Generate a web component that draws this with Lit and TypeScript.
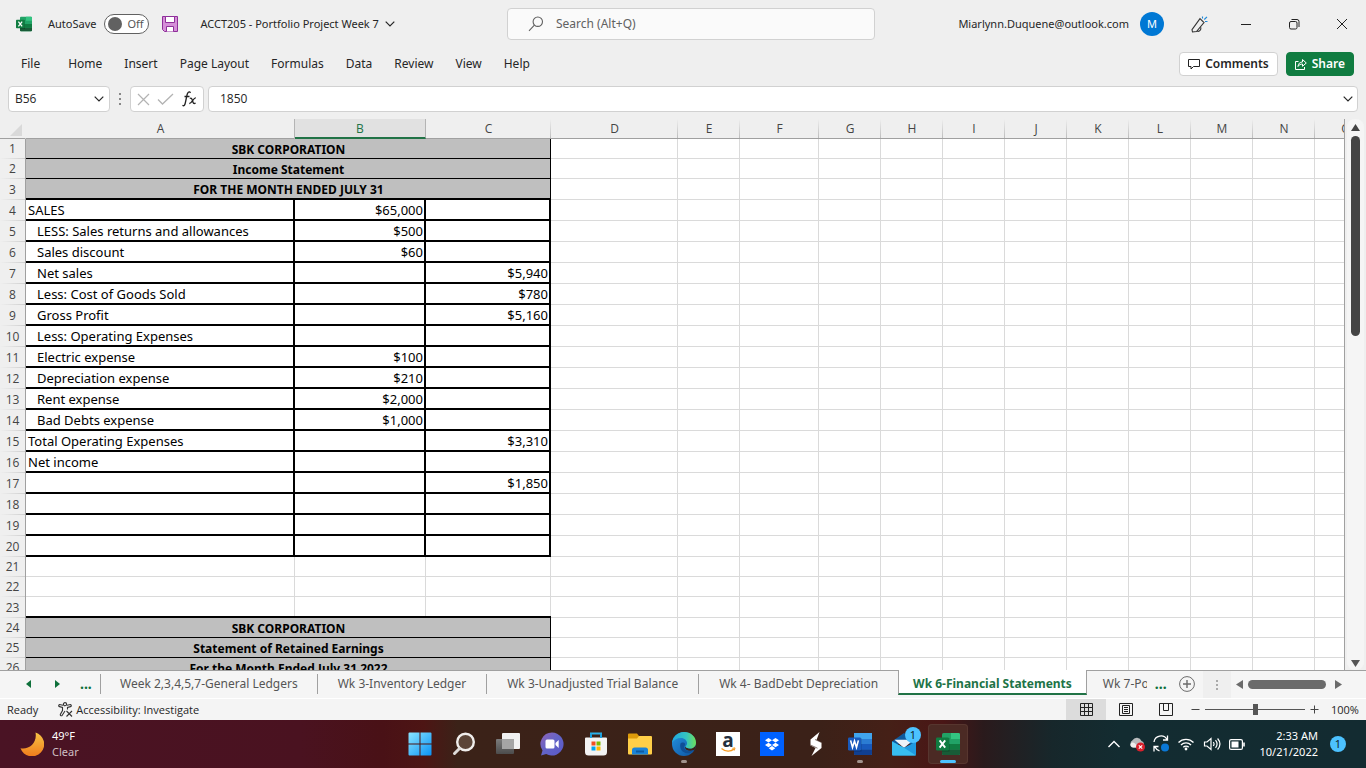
import { LitElement, html, css, svg, nothing } from "lit";
import { customElement } from "lit/decorators.js";
import { classMap } from "lit/directives/class-map.js";

type Row = { a?: string; b?: string; c?: string; title?: string; indent?: boolean };

const COLUMNS: [string, number][] = [
  ["A", 269], ["B", 131], ["C", 125], ["D", 127], ["E", 62], ["F", 79], ["G", 62],
  ["H", 62], ["I", 62], ["J", 62], ["K", 62], ["L", 62], ["M", 62], ["N", 62], ["O", 62],
];

const ROWS: Row[] = [
  { title: "SBK CORPORATION" },
  { title: "Income Statement" },
  { title: "FOR THE MONTH ENDED JULY 31" },
  { a: "SALES", b: "$65,000" },
  { a: "LESS: Sales returns and allowances", b: "$500", indent: true },
  { a: "Sales discount", b: "$60", indent: true },
  { a: "Net sales", c: "$5,940", indent: true },
  { a: "Less: Cost of Goods Sold", c: "$780", indent: true },
  { a: "Gross Profit", c: "$5,160", indent: true },
  { a: "Less: Operating Expenses", indent: true },
  { a: "Electric expense", b: "$100", indent: true },
  { a: "Depreciation expense", b: "$210", indent: true },
  { a: "Rent expense", b: "$2,000", indent: true },
  { a: "Bad Debts expense", b: "$1,000", indent: true },
  { a: "Total Operating Expenses", c: "$3,310" },
  { a: "Net income" },
  { c: "$1,850" },
  {}, {}, {}, {}, {}, {},
  { title: "SBK CORPORATION" },
  { title: "Statement of Retained Earnings" },
  { title: "For the Month Ended July 31 2022" },
];

const MENU = ["File", "Home", "Insert", "Page Layout", "Formulas", "Data", "Review", "View", "Help"];

const chevron = html`<svg width="10" height="6" viewBox="0 0 10 6" fill="none" stroke="currentColor" stroke-width="1.2"><path d="M.7.7 5 5 9.3.7"/></svg>`;

const officeIcon = (letter: string, size: number, c: string[]) => html`
  <svg width=${size} height=${size} viewBox="0 0 24 24">
    <rect x="6" y="1" width="18" height="22" rx="1.5" fill=${c[0]}/>
    <path d=${letter === "X" ? "M15 1h7.500a1.500 1.500 0 0 1 1.500 1.500V7h-9z" : "M6 1h18v6H6z"} fill=${c[1]}/>
    <path d=${letter === "X" ? "M6 7h9v5H6z" : "M6 7h18v5H6z"} fill=${c[2]}/>
    <path d="M6 12h18v5.500H6z" fill=${c[3]}/>
    <path d="M6 17.500h18V21.500a1.500 1.500 0 0 1-1.500 1.500H7.500A1.500 1.500 0 0 1 6 21.500z" fill=${c[4]}/>
    <path d="M6 6h7.500v13.500H6z" fill="#000" opacity=".22"/>
    <rect x="0" y="5.500" width="13" height="13" rx="1.200" fill=${c[5]}/>
    ${letter === "X"
      ? svg`<path d="M3.600 8.400 9.200 15.600M9.200 8.400 3.600 15.600" stroke="#fff" stroke-width="1.900" fill="none"/>`
      : svg`<path d="M2.600 8.400 4.500 15.400 6.500 9 8.500 15.400 10.400 8.400" stroke="#fff" stroke-width="1.600" fill="none"/>`}
  </svg>`;
const EXCEL = ["#21a366", "#33c481", "#21a366", "#107c41", "#185c37", "#107c41"];
const WORD = ["#2b7cd3", "#41a5ee", "#2b7cd3", "#185abd", "#103f91", "#185abd"];

const APPS: { name: string; icon: unknown; active?: boolean; running?: boolean; badge?: string }[] = [
  { name: "Start", icon: html`<svg width="24" height="24" viewBox="0 0 24 24"><defs><linearGradient id="w" x2="1" y2="1"><stop stop-color="#8be4ff"/><stop offset="1" stop-color="#0a93f5"/></linearGradient></defs><path fill="url(#w)" d="M.5 1.500a1 1 0 0 1 1-1h10v11H.5zM12.500.5h10a1 1 0 0 1 1 1v10h-11zM.5 12.500h11v11h-10a1 1 0 0 1-1-1zM12.500 12.500h11v10a1 1 0 0 1-1 1h-10z"/></svg>` },
  { name: "Search", icon: html`<svg width="24" height="24" viewBox="0 0 24 24"><circle cx="13.500" cy="10" r="8.300" fill="#5b4538" stroke="#f0eeec" stroke-width="2.400"/><path d="M7.500 16.500 2.500 21.500" stroke="#dedbd9" stroke-width="3" stroke-linecap="round"/></svg>` },
  { name: "Task view", icon: html`<svg width="26" height="24" viewBox="0 0 26 24"><defs><linearGradient id="t" x2="0" y2="1"><stop stop-color="#7b7b7b"/><stop offset="1" stop-color="#4c4c4c"/></linearGradient></defs><rect x="7" y="1" width="18" height="16" rx="1" fill="#f1f1f1"/><rect x="1" y="7" width="18" height="15" rx="1" fill="url(#t)"/><path d="M7 7h12v10H7z" fill="#a5a5a5"/></svg>` },
  { name: "Chat", icon: html`<svg width="24" height="24" viewBox="0 0 24 24"><defs><linearGradient id="c" x2="1" y2="1"><stop stop-color="#8e63b8"/><stop offset=".5" stop-color="#6264c7"/><stop offset="1" stop-color="#5a58c8"/></linearGradient></defs><path fill="url(#c)" d="M12 .5a11.500 11.500 0 1 1-5.800 21.400L1 23.500l1.500-5A11.500 11.500 0 0 1 12 .5z"/><rect x="5.500" y="7.500" width="9" height="9" rx="1.500" fill="#fff"/><path d="m15.500 11 3.200-3v8l-3.200-3z" fill="#fff"/></svg>` },
  { name: "Microsoft Store", icon: html`<svg width="24" height="24" viewBox="0 0 24 24"><path d="M7 5V1.500h10V5" fill="none" stroke="#2cb2ea" stroke-width="2"/><path d="M1 6.500a1 1 0 0 1 1-1h20a1 1 0 0 1 1 1V20a3.500 3.500 0 0 1-3.500 3.500h-15A3.500 3.500 0 0 1 1 20z" fill="#f3f3f3"/><path d="M7 1.500V6M17 1.500V6" stroke="#1c9fdc" stroke-width="2"/><path fill="#f25022" d="M7.500 9.500h4v4h-4z"/><path fill="#7fba00" d="M12.500 9.500h4v4h-4z"/><path fill="#00a4ef" d="M7.500 14.500h4v4h-4z"/><path fill="#ffb900" d="M12.500 14.500h4v4h-4z"/></svg>` },
  { name: "File Explorer", icon: html`<svg width="24" height="24" viewBox="0 0 24 24"><path d="M0 2.500a1 1 0 0 1 1-1h8l2 2.500h10V8H0z" fill="#dd9b0b"/><path d="M0 6.500h9L11 4h12a1 1 0 0 1 1 1v16.500a1 1 0 0 1-1 1H1a1 1 0 0 1-1-1z" fill="#ffcf48"/><path d="M4 22.500V18a2.500 2.500 0 0 1 2.500-2.500h11A2.500 2.500 0 0 1 20 18v4.500z" fill="#1a83d8"/><path d="M8 19.500h8" stroke="#0d5aa2" stroke-width="2"/></svg>` },
  { name: "Microsoft Edge", running: true, icon: html`<svg width="24" height="24" viewBox="0 0 24 24"><defs><linearGradient id="e1" x1="0" x2="1"><stop stop-color="#1fa7e0"/><stop offset=".6" stop-color="#35c4c0"/><stop offset="1" stop-color="#6ee05a"/></linearGradient><linearGradient id="e2" x2="1" y2="1"><stop stop-color="#2593e0"/><stop offset="1" stop-color="#0c53a0"/></linearGradient></defs><circle cx="12" cy="12" r="12" fill="url(#e2)"/><path d="M24 10.500c0 4-3 6-6 6-3 0-4.500-1.200-4.500-2l-.5.700c0 2.500 3.500 4.500 9.500 2.800 1-2 1.700-4.500 1.500-7.500z" fill="#3b2118"/><path d="M0 11C.5 5 5.500 0 12 0c7 0 12 5 12 10.500 0 4-3 6-6 6-3 0-4.500-1.200-4.500-2 0-.7 1.500-1 1.500-3.200C15 8.500 12.500 6 9 6c-4 0-7.500 2-9 5z" fill="url(#e1)"/><path d="M8.500 11.500c-1.500 5 2 9.500 7 9.800 3 .2 5.500-1.800 6.500-3.300-3 1.700-6.500 1.300-8.500-.5-1.500-1.400-1.800-3-.5-4.500.6-.8-.2-2.500-2-2.500-1.200 0-2.100.2-2.500 1z" fill="#0f4f96"/></svg>` },
  { name: "Amazon", icon: html`<svg width="24" height="24" viewBox="0 0 24 24"><path fill="#fff" d="M0 0h24v24H0z"/><text x="12" y="15" text-anchor="middle" font-family="Open Sans, sans-serif" font-weight="700" font-size="19" fill="#232f3e">a</text><path d="M5.500 16.500c4 3.200 9 3.200 12.500.6" fill="none" stroke="#f79a1f" stroke-width="1.500"/><path d="m16.300 16.300 2.700-.4-.7 2.600" fill="none" stroke="#f79a1f"/></svg>` },
  { name: "Dropbox", icon: html`<svg width="24" height="24" viewBox="0 0 24 24"><path fill="#0061fe" d="M0 0h24v24H0z"/><path fill="#fff" d="m8.500 6 3.500 2.300-3.500 2.300L5 8.300zM15.500 6 19 8.300l-3.500 2.300L12 8.300zM8.500 10.700l3.500 2.300-3.500 2.300L5 13zM15.500 10.700 19 13l-3.500 2.300L12 13zM12 14l3.300 2.200L12 18.400l-3.300-2.200z"/></svg>` },
  { name: "Streamlabs", icon: html`<svg width="24" height="24" viewBox="0 0 24 24"><path fill="#fff" d="M15.500 0 6.500 7.500v6L11.500 16l-4 8L17.500 16V10.500L12.500 8z"/><path d="m6.500 13 7 3.200M11 7.500l6.500 3" stroke="#3b2219" stroke-width=".6"/></svg>` },
  { name: "Word", running: true, icon: officeIcon("W", 24, WORD) },
  { name: "Mail", badge: "1", icon: html`<svg width="24" height="24" viewBox="0 0 24 24"><path d="M0 9.500 12 1l12 8.500V12H0z" fill="#0e5a9e"/><path d="M2.500 7.700h19L12 16z" fill="#eef3f8"/><path d="M24 9.500V22.500a1 1 0 0 1-1 1H1a1 1 0 0 1-1-1V9.500l12 6.300z" fill="#1f9ae0"/><path d="m0 9.500 12 6.300 12 7.700H1a1 1 0 0 1-1-1z" fill="#38bdf0"/></svg>` },
  { name: "Excel", active: true, icon: officeIcon("X", 24, EXCEL) },
];

@customElement("sheet-grid")
class SheetGrid extends LitElement {
  static styles = css`
    :host { display: block; flex: 1; min-width: 0; overflow: hidden; background: #fff; border-right: 1px solid #a0a0a0; }
    table { width: 0; table-layout: fixed; border-collapse: separate; border-spacing: 0; font: 13px/16px "Noto Sans", sans-serif; color: #000; }
    .idx { width: 26px; }
    th { box-sizing: border-box; padding: 0; background: #efefef; color: #444; font: 12px/16px "Open Sans", sans-serif; }
    thead th { height: 20px; border-bottom: 1px solid #a0a0a0; background: linear-gradient(#efefef, #bdbdbd) right / 1px 100% no-repeat #efefef; }
    thead .corner { background: #efefef; border-right: 1px solid #efefef; }
    .corner svg { display: block; margin: 3px 0 0 10px; }
    thead .picked { height: 20px; background: #e1e1e1; color: #217346; border-bottom: 2px solid #217346; border-right: 1px solid #b4b4b4; box-shadow: -1px 0 #b4b4b4; line-height: 15px; }
    tbody th { border-right: 1px solid #a0a0a0; background: linear-gradient(to right, #efefef, #cfcfcf) bottom / 100% 1px no-repeat #efefef; }
    td { box-sizing: border-box; height: 20px; padding: 0 1px 0 2px; border-right: 1px solid #dadada; border-bottom: 1px solid #dadada; white-space: nowrap; overflow: hidden; }
    .tall td { height: 21px; }
    .heavy { border-right: 2px solid #000; border-bottom: 2px solid #000; }
    .under { border-right: 0; border-bottom: 2px solid #000; background: linear-gradient(#dadada, #dadada) right / 1px 100% no-repeat; }
    .title { padding-top: 2px; background: #bfbfbf; border-right: 1px solid #000; border-bottom-color: #000; font-size: 12px; font-weight: 700; text-align: center; }
    .indent { padding-left: 11px; }
    .money { text-align: right; }
  `;

  row(r: Row, i: number) {
    const n = i + 1;
    const boxed = n >= 4 && n <= 20;
    const under = n === 3 || n === 23;
    const edge = { heavy: boxed, under };
    return html`<tr class=${classMap({ tall: boxed || under })}>
      <th scope="row">${n}</th>
      ${r.title
        ? html`<td colspan="3" class=${classMap({ title: true, under })}>${r.title}</td>`
        : html`<td class=${classMap({ ...edge, indent: !!r.indent })}>${r.a ?? nothing}</td>
            <td class=${classMap({ ...edge, money: true })}>${r.b ?? nothing}</td>
            <td class=${classMap({ ...edge, money: true })}>${r.c ?? nothing}</td>`}
      ${COLUMNS.slice(3).map(() => html`<td></td>`)}
    </tr>`;
  }

  render() {
    return html`<table>
      <colgroup><col class="idx" />${COLUMNS.map(([, w]) => html`<col style="width:${w}px" />`)}</colgroup>
      <thead><tr>
        <th class="corner"><svg width="12" height="12"><path d="M12 0v12H0z" fill="#d9d9d9"/></svg></th>
        ${COLUMNS.map(([c]) => html`<th scope="col" class=${classMap({ picked: c === "B" })}>${c}</th>`)}
      </tr></thead>
      <tbody>${ROWS.map((r, i) => this.row(r, i))}</tbody>
    </table>`;
  }
}

@customElement("task-bar")
class TaskBar extends LitElement {
  static styles = css`
    :host { display: grid; grid-template-columns: 1fr auto 1fr; height: 48px; color: #fff; font: 12px/16px "Noto Sans", sans-serif;
      background: linear-gradient(90deg, #4a1324 0, #4a1220 22%, #491116 28%, #4d1514 31%, #3b2218 33.500%, #3b2118 60%, #452017 65%, #4a1616 69%, #2a1a1c 72%, #17272b 77%, #132c31 82%, #132b31 100%); }
    button { all: unset; box-sizing: border-box; }
    .weather { display: flex; align-items: center; gap: 8px; padding-left: 20px; font-size: 11px; }
    .dim { color: #d0bfc4; }
    .apps { display: flex; align-items: center; margin-left: 2px; }
    .app { position: relative; width: 40px; height: 40px; margin: 0 2px; border-radius: 4px; display: grid; place-items: center; }
    .active { background: #4b2a24; box-shadow: inset 0 0 0 1px #57362f; }
    .app::after { position: absolute; left: 17px; bottom: 1px; width: 6px; height: 3px; border-radius: 2px; background: #a2938d; }
    .running::after { content: ""; }
    .active::after { content: ""; left: 12px; width: 16px; background: #4cc2ff; }
    .count { display: grid; place-items: center; width: 16px; height: 16px; border-radius: 50%; background: #4cc2ff; color: #10242c; font-size: 11px; }
    .app .count { position: absolute; right: 3px; top: 3px; }
    .tray { display: flex; align-items: center; justify-content: flex-end; gap: 8px; padding-right: 20px; }
    .clock { margin-left: 6px; margin-right: 4px; text-align: right; font-size: 11px; }
    svg { display: block; }
  `;

  render() {
    return html`
      <div class="weather">
        <svg width="24" height="24" viewBox="0 0 24 24"><defs><linearGradient id="m" x2="0" y2="1"><stop stop-color="#f6c445"/><stop offset="1" stop-color="#f07c1c"/></linearGradient></defs><path d="M15.500.5a12.200 12.200 0 1 1-15 15.800C9 18 17.500 11 15.500.5z" fill="url(#m)"/></svg>
        <div><div>49°F</div><div class="dim">Clear</div></div>
      </div>
      <nav class="apps">${APPS.map((a) => html`<button aria-label=${a.name} class=${classMap({ app: true, active: !!a.active, running: !!a.running })}>${a.icon}${a.badge ? html`<span class="count">${a.badge}</span>` : nothing}</button>`)}</nav>
      <div class="tray">
        <svg width="14" height="8" viewBox="0 0 14 8" fill="none" stroke="#fff" stroke-width="1.400"><path d="m1.500 7 5.500-5.500L12.500 7"/></svg>
        <svg width="16" height="16" viewBox="0 0 16 16"><path d="M4 11.500a4 4 0 0 1-.5-7.200A5 5 0 0 1 12.500 5 3.500 3.500 0 0 1 13 11.500z" fill="#b9bcbe"/><path d="M4 11.500c-3.500-.5-3.500-4.500-.5-5 1-.2 3.500 1 5.500 5z" fill="#eee"/><circle cx="11.500" cy="11" r="4.500" fill="#d9202c"/><path d="m9.800 9.300 3.400 3.400m0-3.400-3.400 3.400" stroke="#fff" stroke-width="1.100"/></svg>
        <svg width="16" height="18" viewBox="0 0 16 18" fill="none" stroke="#fff" stroke-width="1.300"><path d="M1 7a7 7 0 0 1 13-2.500M14.500.5v4.500h-4.500M6.500 15.800A7 7 0 0 1 2 12M1 16.500V11.500h4.500"/><circle cx="12" cy="12.500" r="4" fill="#0a78d6" stroke="none"/></svg>
        <svg width="18" height="14" viewBox="0 0 18 14" fill="none" stroke="#fff" stroke-width="1.400"><path d="M1.500 5.500a10.500 10.500 0 0 1 15 0M4 8a7 7 0 0 1 10 0M6.300 10.300a3.800 3.800 0 0 1 5.400 0"/><circle cx="9" cy="12" r="1.400" fill="#fff" stroke="none"/></svg>
        <svg width="18" height="14" viewBox="0 0 18 14" fill="none" stroke="#fff" stroke-width="1.200"><path d="M1.500 5v4h2.500L8 12.500v-11L4 5zM10.300 5c.9 1.200.9 2.800 0 4M12.500 3.200c2 2.400 2 5.200 0 7.600M14.600 1.500c3 3.500 3 7.500 0 11"/></svg>
        <svg width="16" height="11" viewBox="0 0 16 11"><rect x=".6" y=".6" width="12.800" height="9.800" rx="1.500" fill="none" stroke="#fff" stroke-width="1.200"/><path d="M2.500 2.500h7v6h-7zM14.200 3.500h1.600v4h-1.600z" fill="#fff"/></svg>
        <div class="clock"><div>2:33 AM</div><div>10/21/2022</div></div>
        <span class="count">1</span>
      </div>`;
  }
}

@customElement("app-root")
class AppRoot extends LitElement {
  static styles = css`
    :host { display: flex; flex-direction: column; height: 100vh; overflow: hidden; background: #efefef; color: #262626; font: 12px/16px "Noto Sans", sans-serif; }
    button, input { all: unset; box-sizing: border-box; }
    a { color: inherit; text-decoration: none; }
    svg { display: block; flex: none; }
    .titlebar { display: grid; grid-template-columns: minmax(0, 507fr) minmax(0, 368fr) minmax(0, 491fr); height: 48px; align-items: center; flex: none; font-size: 11px; }
    .left { display: flex; align-items: center; padding-left: 16px; white-space: nowrap; }
    .autosave { display: flex; align-items: center; gap: 8px; margin: 0 13px 0 16px; }
    .switch { display: flex; align-items: center; gap: 5px; width: 45px; height: 20px; padding-left: 3px; border: 1px solid #616161; border-radius: 10px; background: #fff; color: #555; }
    .knob { width: 14px; height: 14px; border-radius: 50%; background: #616161; }
    .doc { display: flex; align-items: center; gap: 6px; margin-left: 22px; }
    .search { display: flex; align-items: center; gap: 12px; height: 32px; padding-left: 20px; border: 1px solid #d1d1d1; border-radius: 4px; background: #fafafa; color: #616161; font-size: 12px; box-sizing: border-box; }
    .search input { flex: 1; min-width: 0; }
    .search input::placeholder { color: #616161; }
    .right { display: flex; align-items: center; justify-content: flex-end; padding-right: 18px; }
    .avatar { display: grid; place-items: center; width: 24px; height: 24px; margin: 0 27px 0 11px; border-radius: 50%; background: #0078d4; color: #fff; }
    .win { display: flex; gap: 36px; margin-left: 32px; }
    .ribbon { display: flex; align-items: center; justify-content: space-between; height: 32px; padding: 0 12px 0 21px; flex: none; }
    .menu { display: flex; gap: 22px; }
    .menu a:first-child { margin-right: 6px; }
    .actions { display: flex; gap: 8px; font-weight: 600; }
    .actions button { display: flex; align-items: center; gap: 5px; height: 24px; padding: 0 8px; border: 1px solid #d1d1d1; border-radius: 4px; background: #fff; }
    .actions .share { background: #107c41; border-color: #107c41; color: #fff; }
    .formula { display: flex; align-items: flex-start; height: 39px; padding: 6px 8px 0; flex: none; box-sizing: border-box; font-family: "Open Sans", sans-serif; }
    .box { display: flex; align-items: center; height: 26px; border: 1px solid #d1d1d1; border-radius: 4px; background: #fff; box-sizing: border-box; }
    .name { width: 102px; padding: 0 5px 0 6px; }
    .name input { flex: 1; min-width: 0; }
    .grip { width: 20px; height: 26px; display: grid; place-items: center; }
    .tools { width: 74px; margin-right: 4px; justify-content: space-around; padding: 0 2px; }
    .entry { flex: 1; min-width: 0; padding: 0 4px 0 11px; }
    .entry input { flex: 1; min-width: 0; }
    .sheet { display: flex; flex: 1; min-height: 0; }
    .vscroll { display: flex; flex-direction: column; align-items: center; width: 17px; margin: 0 2px; padding: 4px 0 2px; border-radius: 8px; background: #f5f5f5; box-sizing: border-box; }
    .vthumb { width: 9px; height: 200px; margin: 4px 0 auto; border-radius: 5px; background: #444; }
    .tabs { display: flex; align-items: flex-start; height: 28px; flex: none; background: #f5f5f5; box-shadow: inset 0 1px #a0a0a0; color: #555; overflow: hidden; }
    .steps { display: flex; align-items: center; gap: 20px; width: 100px; height: 28px; padding-left: 26px; box-sizing: border-box; flex: none; }
    .dots { color: #0f703b; font-size: 14px; font-weight: 700; }
    .tab { flex: none; height: 20px; margin-top: 4px; padding: 0 20px; border-left: 1px solid #a0a0a0; line-height: 19px; box-sizing: border-box; white-space: nowrap; }
    .tab:first-of-type { padding: 0 19px; }
    .tab.current { height: 25px; margin: 0; padding: 4px 14px 0; border-right: 1px solid #a0a0a0; border-bottom: 2px solid #217346; background: #fff; color: #217346; font-weight: 700; }
    .tab.last { border: 0; padding: 0 0 0 16px; width: 60px; overflow: hidden; }
    .more { display: flex; align-items: center; height: 28px; gap: 12px; padding: 0 8px; flex: none; }
    .grab { display: grid; place-items: center; width: 28px; height: 27px; margin-top: 1px; background: #efefef; flex: none; }
    .hscroll { display: flex; align-items: center; flex: 1; gap: 4px; height: 26px; margin: 1px 24px 0 5px; }
    .hthumb { flex: 1; height: 9px; border-radius: 5px; background: #6b6b6b; }
    .status { display: flex; align-items: center; height: 22px; padding-left: 7px; flex: none; border-top: 1px solid #fff; box-sizing: border-box; background: #f4f4f4; font-size: 11px; font-family: "Open Sans", sans-serif; }
    .access { display: flex; align-items: center; gap: 3px; margin: 0 auto 0 20px; }
    .view { display: grid; place-items: center; width: 40px; height: 21px; }
    .view.on { background: #dcdcdc; }
    .zoom { display: flex; align-items: center; gap: 5px; margin-left: 5px; }
    .zoom input { width: 100px; height: 12px; background: linear-gradient(#555, #555) center / 100% 1px no-repeat; }
    .zoom input::-webkit-slider-thumb { -webkit-appearance: none; width: 5px; height: 11px; background: #555; }
    .pct { width: 27px; margin: 0 8px 0 7px; }
  `;

  render() {
    return html`
      <header class="titlebar">
        <div class="left">
          ${officeIcon("X", 16, EXCEL)}
          <div class="autosave"><span id="as">AutoSave</span><button class="switch" role="switch" aria-checked="false" aria-labelledby="as"><span class="knob"></span>Off</button></div>
          <button aria-label="Save"><svg width="16" height="16" viewBox="0 0 16 16"><path d="M.5.5h15v15h-13l-2-2z" fill="#d58fd8" stroke="#8f2f9a"/><path d="M3.500.5h9v6h-9zM4.500 15.500v-5h7v5" fill="#fff" stroke="#8f2f9a"/></svg></button>
          <button class="doc">ACCT205 - Portfolio Project Week 7 ${chevron}</button>
        </div>
        <label class="search">
          <svg width="16" height="16" viewBox="0 0 16 16" fill="none" stroke="#616161" stroke-width="1.100"><circle cx="9.800" cy="5.700" r="4.700"/><path d="M6.400 9.200 1 14.800"/></svg>
          <input type="search" aria-label="Search" placeholder="Search (Alt+Q)" />
        </label>
        <div class="right">
          <span>Miarlynn.Duquene@outlook.com</span>
          <span class="avatar">M</span>
          <svg width="17" height="17" viewBox="0 0 17 17" fill="none" stroke="#333" stroke-width="1.100"><path d="M9 2.700 13 6.500 5.500 15.500 1.500 16 1 13.700zM6 14.700c1 1.300 4 .8 4-3.200"/><path d="M11.500.5v2M13.300 3.500 16 .8M14 5.500h2.500" stroke="#1e88d8"/></svg>
          <div class="win">
            <button aria-label="Minimize"><svg width="12" height="12" stroke="#222"><path d="M1 6.500h10"/></svg></button>
            <button aria-label="Restore"><svg width="12" height="12" viewBox="0 0 12 12" fill="none" stroke="#222"><rect x="1.500" y="3.500" width="7.500" height="7.500" rx="1.500"/><path d="M3.500 1.500H9a2 2 0 0 1 2 2V9"/></svg></button>
            <button aria-label="Close"><svg width="12" height="12" viewBox="0 0 12 12" stroke="#222"><path d="m1 1 10 10M11 1 1 11"/></svg></button>
          </div>
        </div>
      </header>
      <div class="ribbon">
        <nav class="menu">${MENU.map((m) => html`<a href="#">${m}</a>`)}</nav>
        <div class="actions">
          <button><svg width="12" height="11" viewBox="0 0 12 11" fill="none" stroke="#222"><path d="M.5.500h11v7H5.500L3 10V7.500H.5z"/></svg>Comments</button>
          <button class="share"><svg width="12" height="12" viewBox="0 0 12 12" fill="none" stroke="#fff"><path d="M3.500 3.500h-3v8h9V9"/><path d="M3 8.500c.3-3 2-4.500 4.500-4.500V1.500L11.300 5 7.500 8.300V6C5.500 6 4 6.800 3 8.500z"/></svg>Share</button>
        </div>
      </div>
      <div class="formula">
        <div class="box name"><input aria-label="Name box" .value=${"B56"} />${chevron}</div>
        <div class="grip"><svg width="2" height="12" fill="#888"><path d="M0 0h2v2H0zM0 5h2v2H0zM0 10h2v2H0z"/></svg></div>
        <div class="box tools">
          <svg width="13" height="13" viewBox="0 0 13 13" stroke="#b3b3b3" stroke-width="1.200"><path d="m1 1 11 11M12 1 1 12"/></svg>
          <svg width="17" height="12" viewBox="0 0 17 12" fill="none" stroke="#b3b3b3" stroke-width="1.300"><path d="m1 6.500 4.500 4.500L16 1"/></svg>
          <svg width="15" height="16" viewBox="0 0 15 16" fill="none" stroke="#222" stroke-width="1.300"><path d="M8.500 1.800C7-.2 5.500 1.500 5 4L3.300 12C2.800 14.500 1.800 15.300.5 14.300M2.500 5.500h5M7.800 7.500c1.800-1 2.200.5 2.800 2.500.5 2 1 3.200 3 2M13.800 7c-2-.5-4.300 5.800-6.500 5.500"/></svg>
        </div>
        <div class="box entry"><input aria-label="Formula bar" .value=${"1850"} />${chevron}</div>
      </div>
      <main class="sheet">
        <sheet-grid></sheet-grid>
        <div class="vscroll"><svg width="9" height="9"><path d="M4.500 1 9 8H0z" fill="#444"/></svg><div class="vthumb"></div><svg width="9" height="9"><path d="M4.500 8 9 1H0z" fill="#555"/></svg></div>
      </main>
      <div class="tabs">
        <div class="steps"><svg width="9" height="8"><path d="M5 0v8L0 4z" fill="#0f703b"/></svg><svg width="5" height="8"><path d="M0 0v8l5-4z" fill="#0f703b"/></svg><span class="dots">...</span></div>
        <a href="#" class="tab">Week 2,3,4,5,7-General Ledgers</a>
        <a href="#" class="tab">Wk 3-Inventory Ledger</a>
        <a href="#" class="tab">Wk 3-Unadjusted Trial Balance</a>
        <a href="#" class="tab">Wk 4- BadDebt Depreciation</a>
        <a href="#" class="tab current">Wk 6-Financial Statements</a>
        <a href="#" class="tab last">Wk 7-Po</a>
        <div class="more"><span class="dots">...</span><button aria-label="New sheet"><svg width="16" height="16" viewBox="0 0 16 16" fill="none" stroke="#6b6b6b"><circle cx="8" cy="8" r="7.400"/><path d="M8 4v8M4 8h8" stroke-width="1.400"/></svg></button></div>
        <div class="grab"><svg width="2" height="10" fill="#aaa"><path d="M0 0h2v2H0zM0 4h2v2H0zM0 8h2v2H0z"/></svg></div>
        <div class="hscroll"><svg width="8" height="9"><path d="M7 0v9L0 4.500z" fill="#6b6b6b"/></svg><div class="hthumb"></div><svg width="12" height="9"><path d="M5 0v9l7-4.500z" fill="#6b6b6b"/></svg></div>
      </div>
      <footer class="status">
        <span>Ready</span>
        <span class="access"><svg width="15" height="15" viewBox="0 0 15 15" fill="none" stroke="#333" stroke-width="1.100"><circle cx="7" cy="2.200" r="1.600"/><path d="M5 3.200 1.500 2.500C.3 3 .5 4.300 1.500 4.600l3 .9v3L2.300 12.500c-.2 1.200 1.200 1.700 1.900.8L7 9M9 3.200l3.500-.7c1.200.5 1 1.800 0 2.100l-3 .9V7.500M8.500 9l5.500 5.500M14 9l-5.500 5.500"/></svg>Accessibility: Investigate</span>
        <button class="view on" aria-label="Normal"><svg width="13" height="13" viewBox="0 0 13 13" fill="none" stroke="#222"><path d="M.5.500h12v12H.5zM4.500.5v12M8.500.5v12M.5 4.500h12M.5 8.500h12"/></svg></button>
        <button class="view" aria-label="Page layout"><svg width="14" height="13" viewBox="0 0 14 13" fill="none" stroke="#222"><path d="M.5.500h13v12H.5zM3.500 2.500h7v8h-7zM5 4.500h4M5 6.500h4M5 8.500h4"/></svg></button>
        <button class="view" aria-label="Page break preview"><svg width="14" height="13" viewBox="0 0 14 13" fill="none" stroke="#222"><path d="M.5.500h13v12H.5zM4.500.5v7h5v-7"/></svg></button>
        <div class="zoom">
          <svg width="9" height="9" stroke="#444"><path d="M.5 4.500h8"/></svg>
          <input type="range" aria-label="Zoom" min="10" max="190" value="100" />
          <svg width="9" height="9" stroke="#444"><path d="M.5 4.500h8M4.500.5v8"/></svg>
          <span class="pct">100%</span>
        </div>
      </footer>
      <task-bar></task-bar>`;
  }
}
